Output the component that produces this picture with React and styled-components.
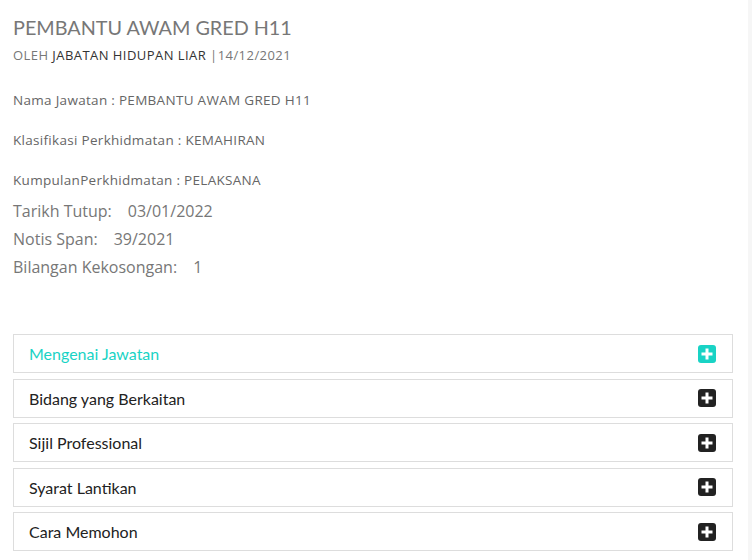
import styled, { createGlobalStyle } from 'styled-components';

const GlobalStyle = createGlobalStyle`
  html, body {
    margin: 0;
    padding: 0;
    background: #fff;
  }
  body {
    font-family: 'Open Sans', 'Liberation Sans', sans-serif;
  }
`;

const sections = [
  { title: 'Mengenai Jawatan', active: true },
  { title: 'Bidang yang Berkaitan' },
  { title: 'Sijil Professional' },
  { title: 'Syarat Lantikan' },
  { title: 'Cara Memohon' },
];

const PlusIcon = ({ color }) => (
  <svg width="18" height="18" viewBox="0 0 18 18">
    <rect x="0" y="0" width="18" height="18" rx="3" fill={color} />
    <rect x="7.5" y="3.5" width="3" height="11" fill="#fff" />
    <rect x="3.5" y="7.5" width="11" height="3" fill="#fff" />
  </svg>
);

const App = () => {
  return (
    <Page>
      <GlobalStyle />
      <Main>
        <Title>PEMBANTU AWAM GRED H11</Title>
        <Byline>
          OLEH <Agency>JABATAN HIDUPAN LIAR</Agency> |14/12/2021
        </Byline>

        <InfoLine>Nama Jawatan : PEMBANTU AWAM GRED H11</InfoLine>
        <InfoLine>Klasifikasi Perkhidmatan : KEMAHIRAN</InfoLine>
        <InfoLine>KumpulanPerkhidmatan : PELAKSANA</InfoLine>

        <Facts>
          <Fact>
            Tarikh Tutup:<FactValue>03/01/2022</FactValue>
          </Fact>
          <Fact>
            Notis Span:<FactValue>39/2021</FactValue>
          </Fact>
          <Fact>
            Bilangan Kekosongan:<FactValue>1</FactValue>
          </Fact>
        </Facts>

        <Accordion>
          {sections.map((s) => (
            <Panel key={s.title}>
              <PanelTitle active={s.active}>{s.title}</PanelTitle>
              <PlusIcon color={s.active ? '#19d3c5' : '#222'} />
            </Panel>
          ))}
        </Accordion>
      </Main>
      <Side />
    </Page>
  );
};

const Page = styled.div`
  display: flex;
  min-height: 560px;
`;

const Main = styled.div`
  width: 748px;
  box-sizing: border-box;
  padding: 14px 15px 0 13px;
  background: #fff;
`;

const Side = styled.div`
  flex: 1;
  background: #f6f6f6;
`;

const Title = styled.h1`
  margin: 0;
  font-family: 'Lato', 'Liberation Sans', sans-serif;
  font-size: 19.8px;
  font-weight: 400;
  line-height: 26px;
  color: #777;
`;

const Byline = styled.div`
  margin-top: 6px;
  font-size: 13px;
  line-height: 18px;
  color: #777;
  letter-spacing: 0.45px;
`;

const Agency = styled.span`
  color: #333;
`;

const InfoLine = styled.p`
  margin: 27px 0 0;
  font-size: 13.5px;
  line-height: 18px;
  color: #666;
  letter-spacing: 0.3px;

  & + & {
    margin-top: 22px;
  }
`;

const Facts = styled.div`
  margin-top: 8px;
  display: flex;
  flex-direction: column;
`;

const Fact = styled.div`
  font-size: 16px;
  line-height: 28px;
  color: #777;
`;

const FactValue = styled.span`
  margin-left: 16px;
`;

const Accordion = styled.div`
  margin-top: 53px;
  display: flex;
  flex-direction: column;
  gap: 5.5px;
`;

const Panel = styled.div`
  height: 39px;
  box-sizing: border-box;
  border: 1px solid #ddd;
  display: flex;
  align-items: center;
  justify-content: space-between;
  padding: 0 16px 0 15px;
`;

const PanelTitle = styled.span`
  font-family: 'Lato', 'Liberation Sans', sans-serif;
  font-size: 16px;
  color: ${({ active }) => (active ? '#19d3c5' : '#222')};
`;

export default App;
